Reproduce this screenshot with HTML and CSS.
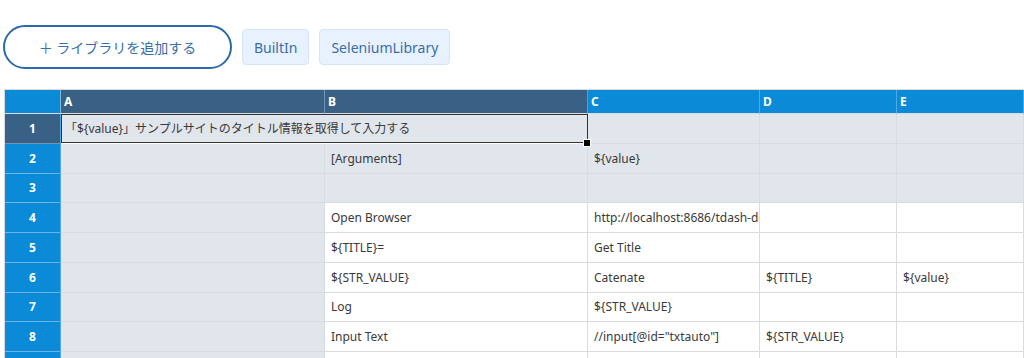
FILE: index.html
```html
<!DOCTYPE html>
<html>
<head>
    <meta charset="utf-8">
    <link rel="stylesheet" href="styles.css">
</head>
<body>
    <div class="toolbar">
        <button class="add-lib">＋ ライブラリを追加する</button>
        <span class="chip">BuiltIn</span>
        <span class="chip">SeleniumLibrary</span>
    </div>

    <div class="sheet">
        <div class="hd corner"></div>
        <div class="hd col sel">A</div>
        <div class="hd col sel">B</div>
        <div class="hd col">C</div>
        <div class="hd col">D</div>
        <div class="hd col">E</div>

        <div class="rn sel">1</div>
        <div class="cell gray selected">「${value}」サンプルサイトのタイトル情報を取得して入力する</div>
        <div class="cell gray"></div>
        <div class="cell gray"></div>
        <div class="cell gray"></div>

        <div class="rn">2</div>
        <div class="cell gray"></div>
        <div class="cell gray">[Arguments]</div>
        <div class="cell gray">${value}</div>
        <div class="cell gray"></div>
        <div class="cell gray"></div>

        <div class="rn">3</div>
        <div class="cell gray"></div>
        <div class="cell gray"></div>
        <div class="cell gray"></div>
        <div class="cell gray"></div>
        <div class="cell gray"></div>

        <div class="rn">4</div>
        <div class="cell gray"></div>
        <div class="cell">Open Browser</div>
        <div class="cell">http://localhost:8686/tdash-demo/</div>
        <div class="cell"></div>
        <div class="cell"></div>

        <div class="rn">5</div>
        <div class="cell gray"></div>
        <div class="cell">${TITLE}=</div>
        <div class="cell">Get Title</div>
        <div class="cell"></div>
        <div class="cell"></div>

        <div class="rn">6</div>
        <div class="cell gray"></div>
        <div class="cell">${STR_VALUE}</div>
        <div class="cell">Catenate</div>
        <div class="cell">${TITLE}</div>
        <div class="cell">${value}</div>

        <div class="rn">7</div>
        <div class="cell gray"></div>
        <div class="cell">Log</div>
        <div class="cell">${STR_VALUE}</div>
        <div class="cell"></div>
        <div class="cell"></div>

        <div class="rn">8</div>
        <div class="cell gray"></div>
        <div class="cell">Input Text</div>
        <div class="cell">//input[@id="txtauto"]</div>
        <div class="cell">${STR_VALUE}</div>
        <div class="cell"></div>

        <div class="rn">9</div>
        <div class="cell gray"></div>
        <div class="cell"></div>
        <div class="cell"></div>
        <div class="cell"></div>
        <div class="cell"></div>
    </div>
</body>
</html>
```

FILE: styles.css
```css
body {
    margin: 0;
    font-family: "Noto Sans", "Noto Sans CJK JP", sans-serif;
    background: #fff;
    overflow: hidden;
}

.toolbar {
    display: flex;
    align-items: center;
    gap: 10px;
    padding: 25px 0 0 3px;
    height: 44px;
}

.add-lib {
    width: 229px;
    height: 44px;
    border: 2px solid #2c69ab;
    border-radius: 22px;
    background: #fff;
    color: #3a6ea8;
    font-family: "Noto Sans", "Noto Sans CJK JP", sans-serif;
    font-size: 14px;
    padding: 0;
}

.chip {
    height: 36px;
    box-sizing: border-box;
    padding: 0 11px;
    display: flex;
    align-items: center;
    background: #e8f2fe;
    border: 1px solid #d5e5f8;
    border-radius: 4px;
    color: #3a6ea8;
    font-size: 14px;
}

.sheet {
    margin: 20px 0 0 4px;
    border-left: 1px solid #d8dbe0;
    border-top: 1px solid #d8dbe0;
    display: grid;
    grid-template-columns: 56px 264px 263px 172px 137px 1fr;
    grid-template-rows: 24px repeat(9, 29.75px);
    font-size: 12px;
    color: #3a3a3a;
}

.hd {
    background: #0a8ad7;
    color: #fff;
    font-weight: bold;
    font-size: 12px;
    display: flex;
    align-items: center;
    padding-left: 3px;
    border-right: 1px solid #4eaae6;
    border-bottom: 1px solid #d8dbe0;
}

.hd.corner {
    padding: 0;
    border-right-color: #7fb6dc;
}

.hd.sel {
    background: #396186;
    border-right-color: #7393b0;
}

.rn {
    background: #0a8ad7;
    color: #fff;
    font-weight: bold;
    display: flex;
    align-items: center;
    justify-content: center;
    border-right: 1px solid #4eaae6;
    border-bottom: 1px solid #6bb4e6;
}

.rn.sel {
    background: #396186;
    border-bottom-color: #7393b0;
}

.cell {
    background: #fff;
    border-right: 1px solid #d8dbe0;
    border-bottom: 1px solid #d8dbe0;
    display: flex;
    align-items: center;
    padding-left: 6px;
    white-space: nowrap;
    overflow: hidden;
}

.cell.gray {
    background: #e1e5ec;
}

.cell.selected {
    grid-column: span 2;
    position: relative;
    overflow: visible;
    padding-left: 4px;
    border-bottom: none;
    border-right: none;
    box-shadow: inset 1px 1px 0 #333, inset -1px -1px 0 #333;
    margin-bottom: 1px;
}

/* fill handle */
.cell.selected::after {
    content: "";
    position: absolute;
    right: -3px;
    bottom: -4px;
    width: 6px;
    height: 6px;
    background: #000;
    border: 1px solid #fff;
}
```
